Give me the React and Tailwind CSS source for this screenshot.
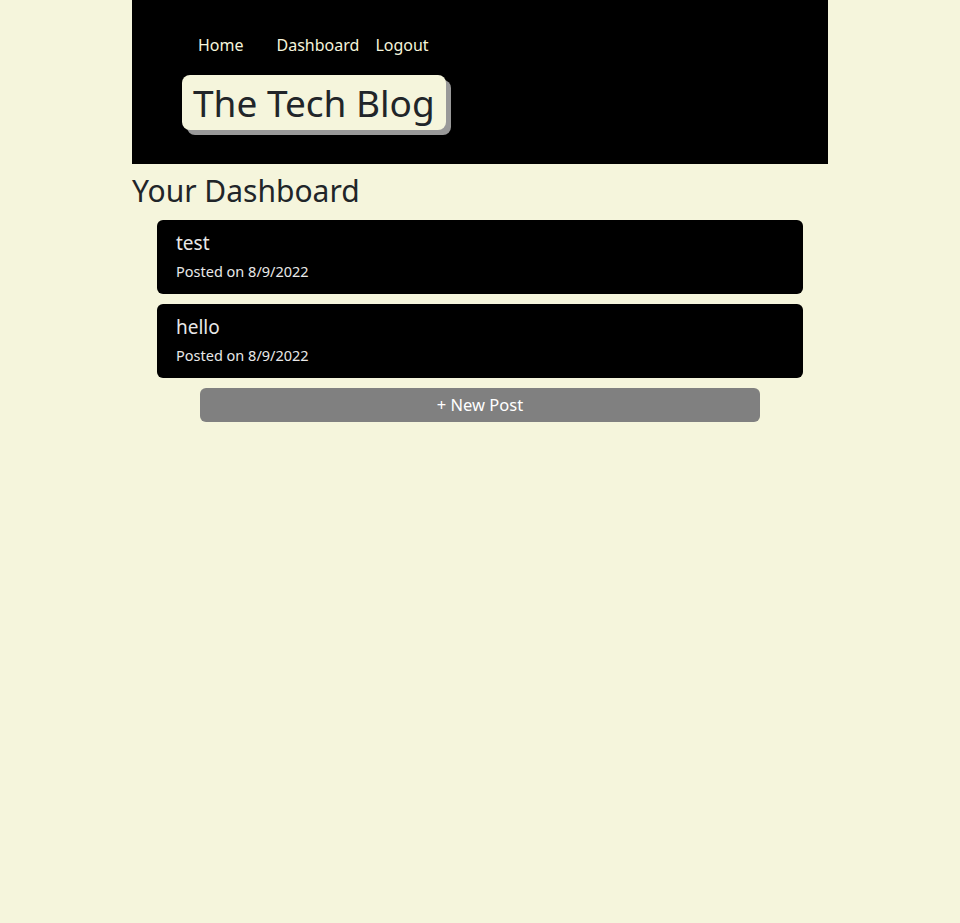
const posts = [
  { title: "test", date: "8/9/2022" },
  { title: "hello", date: "8/9/2022" },
];

function App() {
  return (
    <div
      className="min-h-screen bg-[#f5f5dc] text-[#212529]"
      style={{ fontFamily: '"Noto Sans", "Open Sans", sans-serif' }}
    >
      <div className="mx-auto w-[696px]">
        {/* Header */}
        <header className="bg-black h-[164px] pt-[33px]">
          <nav className="flex items-center text-[16px] leading-6 text-[#f5f5dc] pl-[66px]">
            <a href="#" className="mr-[33px]">Home</a>
            <a href="#" className="mr-[16px]">Dashboard</a>
            <a href="#">Logout</a>
          </nav>
          <div className="mt-[18px] ml-[50px] inline-block">
            <h1 className="bg-[#f5f5dc] rounded-lg px-[11px] h-[55px] flex items-center text-[37px] text-[#212529] shadow-[5px_5px_0_#999]">
              The Tech Blog
            </h1>
          </div>
        </header>

        {/* Dashboard */}
        <h2 className="text-[30px] leading-[46px] mt-[4px]">Your Dashboard</h2>
        <div className="flex flex-col gap-[10px] px-[25px] mt-[6px]">
          {posts.map((p) => (
            <div key={p.title} className="bg-black rounded-md h-[74px] px-[19px] pt-[9px] text-[#e8e8e8]">
              <div className="text-[19px] leading-7">{p.title}</div>
              <div className="text-[14.5px] leading-6 mt-[2px]">Posted on {p.date}</div>
            </div>
          ))}
        </div>
        <div className="px-[68px] mt-[10px]">
          <button className="w-full h-[34px] bg-[#808080] rounded-md text-white text-[16.5px]">
            + New Post
          </button>
        </div>
      </div>
    </div>
  );
}

export default App;
